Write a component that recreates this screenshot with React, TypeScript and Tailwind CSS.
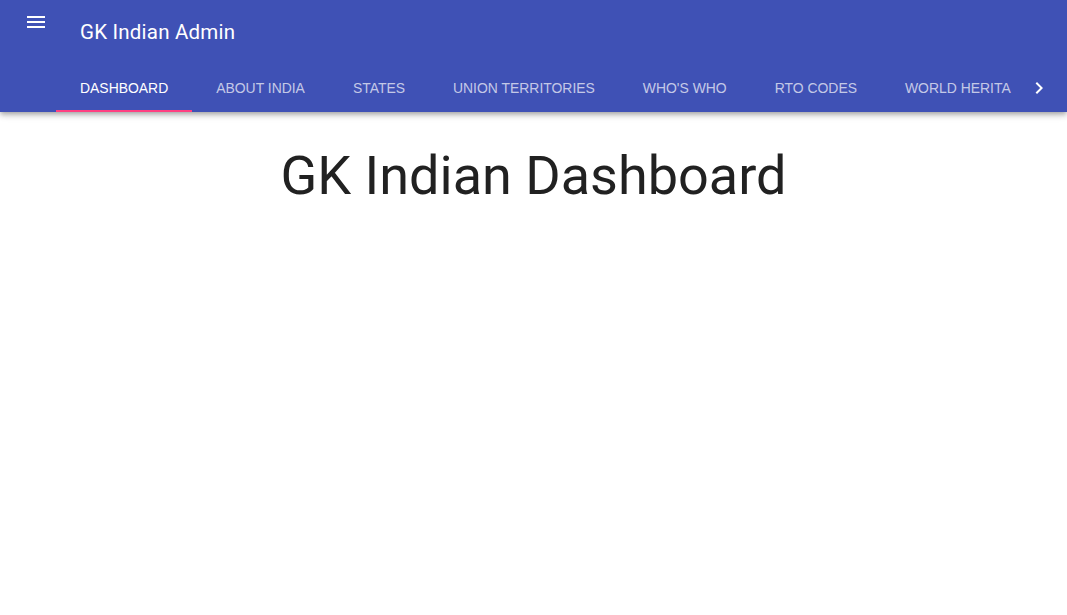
import React from 'react';

const tabs = ['Dashboard', 'About India', 'States', 'Union Territories', "Who's Who", 'RTO Codes', 'World Herita'];

const MenuIcon = () => (
  <svg width="24" height="24" viewBox="0 0 24 24" fill="white">
    <path d="M3 18h18v-2H3v2zm0-5h18v-2H3v2zm0-7v2h18V6H3z" />
  </svg>
);

const ChevronRight = () => (
  <svg width="24" height="24" viewBox="0 0 24 24" fill="white">
    <path d="M10 6L8.59 7.41 13.17 12l-4.58 4.59L10 18l6-6z" />
  </svg>
);

const App = () => {
  return (
    <div className="min-h-screen bg-white" style={{ fontFamily: 'Roboto, "Liberation Sans", sans-serif' }}>
      {/* App bar */}
      <header className="bg-[#3f51b5] text-white shadow-[0_2px_4px_-1px_rgba(0,0,0,0.2),0_4px_5px_0_rgba(0,0,0,0.14),0_1px_10px_0_rgba(0,0,0,0.12)]">
        <div className="flex h-16 items-start">
          <div className="ml-6 mt-2.5">
            <MenuIcon />
          </div>
          <h1 className="ml-8 mt-[19px] text-[20.5px] font-normal leading-[26px] tracking-[0.01em]">GK Indian Admin</h1>
        </div>

        <div className="flex h-12 items-stretch pl-4 pr-2">
          <div className="w-10 shrink-0" />
          <div className="flex flex-1 overflow-hidden">
            {tabs.map((t, i) => (
              <div
                key={t}
                className={`relative flex shrink-0 items-center px-6 text-[13.93px] uppercase ${i === 0 ? 'text-white' : 'text-white/70'}`}
                style={{ fontFamily: '"Liberation Sans", Arial, sans-serif' }}
              >
                {t}
                {i === 0 && <span className="absolute bottom-0 left-0 right-0 h-0.5 bg-[#ff4081]" />}
              </div>
            ))}
          </div>
          <div className="flex w-10 shrink-0 items-center justify-center">
            <ChevronRight />
          </div>
        </div>
      </header>

      <main className="flex justify-center pt-[28px]">
        <h2 className="text-[54px] font-normal leading-[72px] text-[#212121]">GK Indian Dashboard</h2>
      </main>
    </div>
  );
};

export default App;
